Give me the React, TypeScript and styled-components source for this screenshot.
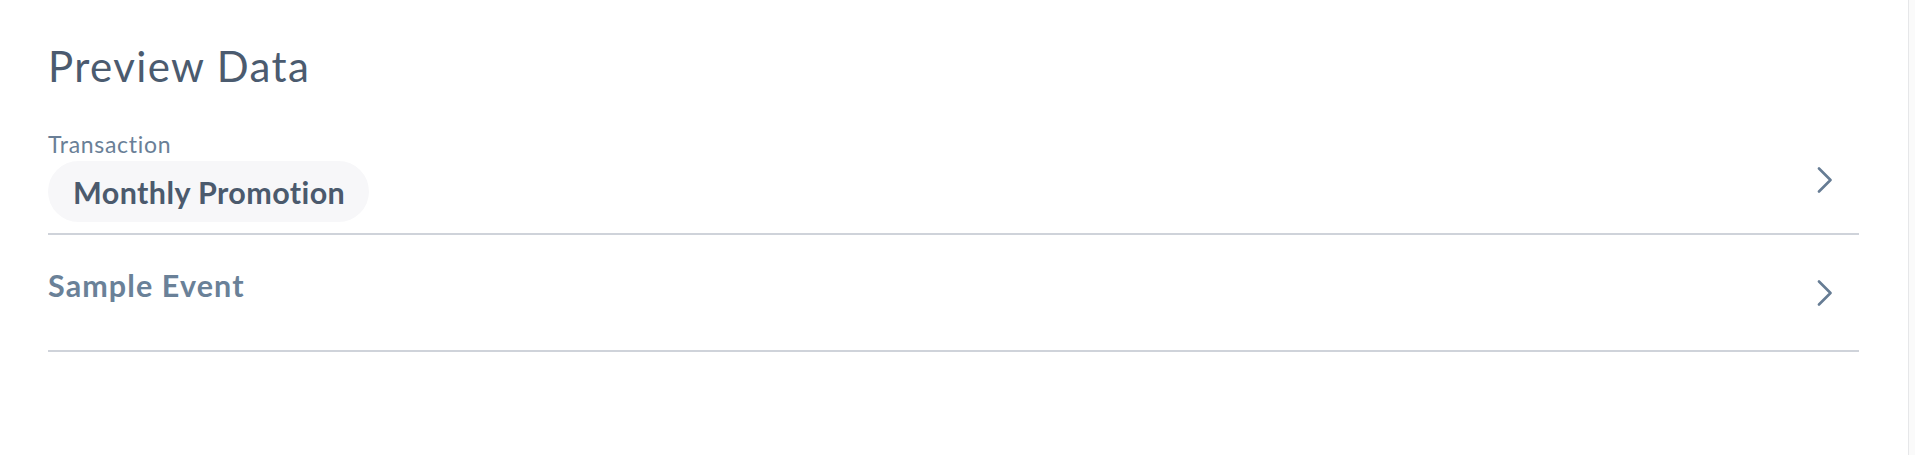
import React from "react";
import styled, { createGlobalStyle } from "styled-components";

const Global = createGlobalStyle`
  html, body { margin: 0; padding: 0; background: #ffffff; }
  body { font-family: "Lato", "Open Sans", sans-serif; -webkit-font-smoothing: antialiased; }
`;

const Page = styled.div`
  display: flex;
  width: 1915px;
  height: 455px;
  overflow: hidden;
`;

const Panel = styled.div`
  flex: 1;
  padding: 0 49px 0 48px;
  display: flex;
  flex-direction: column;
`;

const Track = styled.div`
  width: 6px;
  border-left: 1px solid #e6e7e9;
  background: #fafafa;
`;

const Title = styled.h2`
  margin: 42px 0 0 0;
  font-size: 42px;
  font-weight: 400;
  line-height: 48px;
  color: #4b5b6f;
  letter-spacing: 1.4px;
`;

const Row = styled.div<{ $h: number; $align?: string }>`
  display: flex;
  align-items: ${(p) => p.$align ?? "center"};
  justify-content: space-between;
  height: ${(p) => p.$h}px;
  border-bottom: 2px solid #cfd3da;
`;

const Stack = styled.div`
  display: flex;
  flex-direction: column;
  margin-bottom: 11px;
`;

const Label = styled.span`
  font-size: 23px;
  line-height: 26px;
  color: #6a7f97;
  letter-spacing: 0.7px;
  margin-bottom: 4px;
`;

const Pill = styled.span`
  display: inline-flex;
  align-items: center;
  height: 61px;
  padding: 0 24px 0 25px;
  border-radius: 31px;
  background: #f7f7f9;
  font-size: 30.5px;
  font-weight: 700;
  color: #4b5a6d;
  letter-spacing: 0.4px;
`;

const EventName = styled.span`
  font-size: 30.5px;
  font-weight: 700;
  color: #6a8198;
  letter-spacing: 1.1px;
  margin-top: -16px;
`;

const ChevronSlot = styled.span<{ $offset: number }>`
  display: flex;
  align-self: center;
  margin-top: ${(p) => p.$offset}px;
`;

const Chevron = styled.svg`
  width: 16px;
  height: 26px;
  margin-right: 26px;
  flex: none;
`;

const ChevronIcon = () => (
  <Chevron viewBox="0 0 16 26" fill="none">
    <path d="M2 1.5 L13.5 13 L2 24.5" stroke="#667c94" strokeWidth="2.6" strokeLinecap="round" strokeLinejoin="round" />
  </Chevron>
);

export default function App() {
  return (
    <Page>
      <Global />
      <Panel>
        <Title>Preview Data</Title>
        <Row $h={143} $align="flex-end">
          <Stack>
            <Label>Transaction</Label>
            <Pill>Monthly Promotion</Pill>
          </Stack>
          <ChevronSlot $offset={37}>
            <ChevronIcon />
          </ChevronSlot>
        </Row>
        <Row $h={115}>
          <EventName>Sample Event</EventName>
          <ChevronSlot $offset={0}>
            <ChevronIcon />
          </ChevronSlot>
        </Row>
      </Panel>
      <Track />
    </Page>
  );
}
